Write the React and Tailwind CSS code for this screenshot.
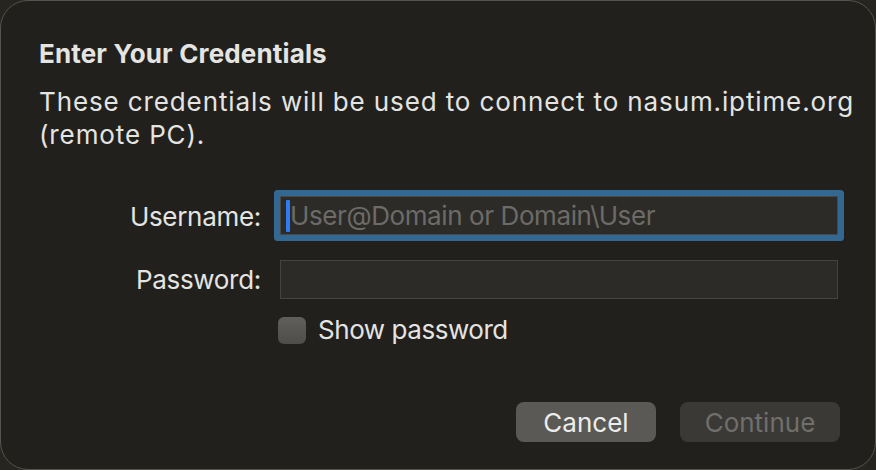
import React from "react";

export default function App() {
  return (
    <div className="w-[876px] h-[470px] bg-[#26251f] overflow-hidden" style={{ fontFamily: "Inter, 'Noto Sans', sans-serif" }}>
      <div className="w-[876px] h-[470px] rounded-[28px] bg-[#21201d] border border-[#55544f] flex flex-col">
        <div className="pl-[38px] pt-[37px] pr-[10px]">
          <div className="text-[26px] font-bold text-[#e4e4e2] leading-[32px] tracking-[0.15px]">Enter Your Credentials</div>
          <div className="mt-[15px] text-[26px] text-[#e4e4e2] leading-[33px] tracking-[0.88px] whitespace-nowrap">
            These credentials will be used to connect to nasum.iptime.org
            <br />
            (remote PC).
          </div>
        </div>
        <div className="mt-[40px] grid grid-cols-[260px_558px] gap-x-[19px] items-center">
          <div className="text-right text-[26px] text-[#e4e4e2] tracking-[-0.3px] leading-[39px]">Username:</div>
          <div className="mt-[5px] mb-[6px] h-[39px] rounded-[1px] bg-[#2c2b28] border border-[#4a4945] shadow-[0_0_0_6px_#336893] flex items-center pl-[5px]">
            <div className="w-[4px] h-[32px] bg-[#2f7bf5] rounded-[1px]" />
            <span className="text-[26px] text-[#6c6b67] tracking-[-0.4px] leading-[32px]">User@Domain or Domain\User</span>
          </div>
          <div className="mt-[19px] text-right text-[26px] text-[#e4e4e2] tracking-[-0.3px] leading-[39px]">Password:</div>
          <div className="mt-[19px] h-[39px] bg-[#2c2b28] border border-[#45443f]" />
          <div />
          <div className="mt-[17px] -ml-[2px] flex items-center gap-[12px] h-[28px]">
            <div className="w-[28px] h-[27px] rounded-[6px] bg-gradient-to-b from-[#615f5c] to-[#4e4d4a]" />
            <span className="text-[26px] text-[#e4e4e2] tracking-[-0.45px] leading-[28px]">Show password</span>
          </div>
        </div>
        <div className="mt-auto mb-[27px] pr-[35px] flex justify-end gap-[24px]">
          <div className="w-[140px] h-[40px] rounded-[8px] bg-[#5a5955] flex items-center justify-center text-[26px] text-[#ececea]">Cancel</div>
          <div className="w-[160px] h-[40px] rounded-[8px] bg-[#3a3936] flex items-center justify-center text-[26px] text-[#706f6b]">Continue</div>
        </div>
      </div>
    </div>
  );
}
